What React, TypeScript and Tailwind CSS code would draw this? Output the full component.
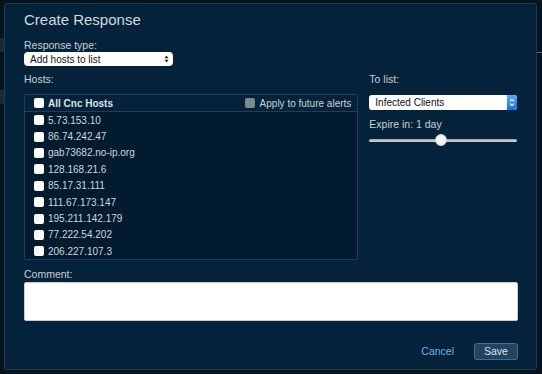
import React from "react";

const hosts = [
  "5.73.153.10",
  "86.74.242.47",
  "gab73682.no-ip.org",
  "128.168.21.6",
  "85.17.31.111",
  "111.67.173.147",
  "195.211.142.179",
  "77.222.54.202",
  "206.227.107.3",
];

const Box = ({ grey = false }: { grey?: boolean }) => (
  <span
    className={`inline-block w-[10px] h-[10px] rounded-[2px] shrink-0 ${
      grey ? "bg-[#7d8891]" : "bg-white"
    }`}
  />
);

const App = () => {
  return (
    <div
      className="relative w-[542px] h-[374px] overflow-hidden bg-[#07131d] pt-[3px] pl-[4px]"
      style={{ fontFamily: '"Liberation Sans", Arial, sans-serif' }}
    >
      {/* page behind the modal */}
      <div className="absolute left-0 top-[38px] w-[4px] h-[14px] bg-[#1a2a36]" />
      <div className="absolute left-0 top-[90px] w-[4px] h-[14px] bg-[#1a2a36]" />
      <div className="absolute right-0 top-[52px] w-[5px] h-[1px] bg-[#5a6670]" />

      {/* Modal */}
      <div className="relative w-[533px] h-[367px] rounded-[3px] border border-[#1d3c56] bg-[#04233a] text-[#c9d0d6] px-[19px]">
        <h1 className="pt-[7px] text-[15px] leading-[18px] text-[#d3d9de]">
          Create Response
        </h1>

        <div className="mt-[10px] text-[10.5px] leading-[12px]">Response type:</div>
        <div className="mt-[1px] w-[149px] h-[14px] rounded-[4px] bg-white flex items-center justify-between pl-[6px] pr-[4px] text-[10px] text-[#111]">
          <span>Add hosts to list</span>
          <svg width="5" height="8" viewBox="0 0 5 8">
            <path d="M0.5 3.2 L2.5 0.6 L4.5 3.2 Z M0.5 4.8 L2.5 7.4 L4.5 4.8 Z" fill="#222" />
          </svg>
        </div>

        <div className="mt-[7px] flex gap-[11px]">
          {/* Hosts column */}
          <div className="w-[335px]">
            <div className="text-[10.5px] leading-[12px]">Hosts:</div>
            <div className="mt-[9px] h-[166px] rounded-[2px] border border-[#1f3e58] bg-[#021b2e] overflow-hidden">
              <div className="h-[17px] border-b border-[#1f3e58] bg-[#04233a] flex items-center pl-[9px] pr-[6px] text-[10px]">
                <Box />
                <span className="ml-[4px] font-bold text-[#dde2e6]">All Cnc Hosts</span>
                <span className="ml-auto flex items-center gap-[5px]">
                  <Box grey />
                  <span className="text-[10px]">Apply to future alerts</span>
                </span>
              </div>
              {hosts.map((h) => (
                <div key={h} className="h-[16.4px] flex items-center pl-[9px] text-[10px] text-[#d0d6db]">
                  <Box />
                  <span className="ml-[4px]">{h}</span>
                </div>
              ))}
            </div>
          </div>

          {/* To list column */}
          <div className="w-[148px]">
            <div className="text-[10.5px] leading-[12px]">To list:</div>
            <div className="mt-[10px] h-[15px] rounded-[3px] bg-white flex items-center justify-between pl-[6px] text-[10px] text-[#111] overflow-hidden">
              <span>Infected Clients</span>
              <span className="w-[10px] h-full rounded-r-[3px] bg-gradient-to-b from-[#5aa4ff] to-[#1c6fe6] flex items-center justify-center">
                <svg width="6" height="9" viewBox="0 0 6 9">
                  <path d="M1 3.3 L3 1.3 L5 3.3 M1 5.7 L3 7.7 L5 5.7" stroke="#fff" strokeWidth="1.1" fill="none" />
                </svg>
              </span>
            </div>
            <div className="mt-[8px] text-[10.5px] leading-[12px]">Expire in: 1 day</div>
            <div className="relative mt-[3px] h-[14px] flex items-center">
              <div className="w-full h-[3px] rounded-full bg-gradient-to-b from-[#9aa2a8] to-[#d7dbde]" />
              <div className="absolute left-[66px] top-[1px] w-[12px] h-[12px] rounded-full bg-[#f4f5f6] border border-[#c5cacd]" />
            </div>
          </div>
        </div>

        <div className="mt-[8px] text-[10.5px] leading-[12px] text-[#c9d0d6]">Comment:</div>
        <div className="mt-[2px] w-[494px] h-[39px] rounded-[2px] bg-white border border-[#c9ced2]" />

        <div className="mt-[22px] w-[494px] flex justify-end items-center gap-[20px]">
          <span className="text-[10.5px] text-[#6fb3e4]">Cancel</span>
          <button className="w-[44px] h-[17px] rounded-[3px] bg-[#1f4464] border border-[#4b6c8b] text-[10.5px] text-[#dfe5ea]">
            Save
          </button>
        </div>
      </div>
    </div>
  );
};

export default App;
